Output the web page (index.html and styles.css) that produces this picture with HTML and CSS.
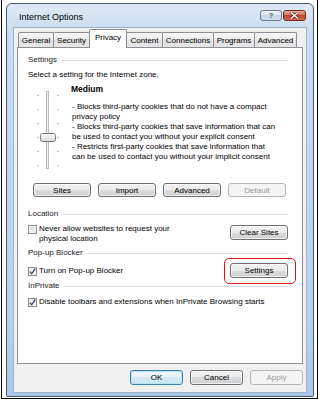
FILE: index.html
```html
<!DOCTYPE html>
<html lang="en">
  <head>
    <meta charset="UTF-8" />
    <title>Internet Options</title>
    <link rel="stylesheet" href="styles.css">
  </head>
  <body>
    <div class="shot">
      <div class="outline">
        <div class="window">
          <div class="titlebar">
            <span class="title">Internet Options</span>
            <div class="caption">
              <span class="cap help">?</span>
              <span class="cap close">
                <svg width="9" height="7" viewBox="0 0 9 7">
                  <path d="M1 0.5 L8 6.5 M8 0.5 L1 6.5" stroke="#5a1a12" stroke-width="2.6"/>
                  <path d="M1 0.5 L8 6.5 M8 0.5 L1 6.5" stroke="#ffffff" stroke-width="1.4"/>
                </svg>
              </span>
            </div>
          </div>

          <div class="client">
            <div class="tabs">
              <span class="tab w-general">General</span>
              <span class="tab w-security">Security</span>
              <span class="tab w-privacy active">Privacy</span>
              <span class="tab w-content">Content</span>
              <span class="tab w-connections">Connections</span>
              <span class="tab w-programs">Programs</span>
              <span class="tab w-advanced">Advanced</span>
            </div>

            <div class="panel">
              <div class="group-head"><span>Settings</span></div>
              <p class="intro">Select a setting for the Internet zone.</p>

              <div class="zone">
                <svg class="slider" width="43" height="90" viewBox="0 0 43 90">
                  <defs>
                    <linearGradient id="thumb" x1="0" y1="0" x2="0" y2="1">
                      <stop offset="0" stop-color="#fbfbfb" />
                      <stop offset="0.5" stop-color="#ececec" />
                      <stop offset="1" stop-color="#d6d6d6" />
                    </linearGradient>
                  </defs>
                  <rect x="18.5" y="7.5" width="2" height="77" fill="#f4f4f4" stroke="#b9bcbf" />
                  <g fill="#c4c4c4">
                    <rect x="9" y="11" width="2" height="1" />
                    <rect x="29" y="11" width="2" height="1" />
                    <rect x="9" y="25" width="2" height="1" />
                    <rect x="29" y="25" width="2" height="1" />
                    <rect x="9" y="39" width="2" height="1" />
                    <rect x="29" y="39" width="2" height="1" />
                    <rect x="9" y="53" width="2" height="1" />
                    <rect x="29" y="53" width="2" height="1" />
                    <rect x="9" y="67" width="2" height="1" />
                    <rect x="29" y="67" width="2" height="1" />
                    <rect x="9" y="81" width="2" height="1" />
                    <rect x="29" y="81" width="2" height="1" />
                  </g>
                  <rect x="12.5" y="49.5" width="15" height="8" rx="2" fill="url(#thumb)" stroke="#7a7a7a" />
                </svg>
                <div class="level">
                  <strong class="level-name">Medium</strong>
                  <p class="level-desc">
                    - Blocks third-party cookies that do not have a compact<br>
                    privacy policy<br>
                    - Blocks third-party cookies that save information that can<br>
                    be used to contact you without your explicit consent<br>
                    - Restricts first-party cookies that save information that<br>
                    can be used to contact you without your implicit consent
                  </p>
                </div>
              </div>

              <div class="btn-row">
                <button class="btn wide">Sites</button>
                <button class="btn wide">Import</button>
                <button class="btn wide">Advanced</button>
                <button class="btn wide" disabled>Default</button>
              </div>

              <div class="group-head head-location"><span>Location</span></div>
              <div class="opt-row loc-row">
                <label class="check">
                  <span class="box"></span>
                  <span>Never allow websites to request your<br>physical location</span>
                </label>
                <button class="btn side">Clear Sites</button>
              </div>

              <div class="group-head head-popup"><span>Pop-up Blocker</span></div>
              <div class="opt-row popup-row">
                <label class="check">
                  <span class="box checked">
                    <svg width="7" height="7" viewBox="0 0 7 7"><path d="M0.8 3.6 L2.7 5.8 L6.3 0.6" fill="none" stroke="#33486b" stroke-width="1.3" /></svg>
                  </span>
                  <span>Turn on Pop-up Blocker</span>
                </label>
                <button class="btn side marked">Settings</button>
              </div>

              <div class="group-head head-private"><span>InPrivate</span></div>
              <div class="opt-row private-row">
                <label class="check">
                  <span class="box checked">
                    <svg width="7" height="7" viewBox="0 0 7 7"><path d="M0.8 3.6 L2.7 5.8 L6.3 0.6" fill="none" stroke="#33486b" stroke-width="1.3" /></svg>
                  </span>
                  <span>Disable toolbars and extensions when InPrivate Browsing starts</span>
                </label>
              </div>
            </div>

            <div class="footer">
              <button class="btn foot default">OK</button>
              <button class="btn foot">Cancel</button>
              <button class="btn foot" disabled>Apply</button>
            </div>
          </div>
        </div>
      </div>
    </div>
  </body>
</html>
```

FILE: styles.css
```css
* {
  box-sizing: border-box;
}

body {
  margin: 0;
  background: #ffffff;
  font-family: "Liberation Sans", Arial, sans-serif;
  font-size: 8px;
  color: #000000;
}

/* Screenshot frame */
.shot {
  width: 320px;
  height: 402px;
  padding: 0 2px 0 1px;
}

.outline {
  height: 399px;
  border: 1px solid #000000;
  border-top: 0;
  padding: 3px 3px 1px 4px;
}

/* Dialog window */
.window {
  height: 394px;
  border: 1px solid #4a5a6c;
  border-radius: 6px 6px 2px 2px;
  background: linear-gradient(#dfe9f5, #c9dbef 30px, #b9d1ec 80%, #a9c8e8);
  padding: 0 6px 3px 6px;
  display: flex;
  flex-direction: column;
}

.titlebar {
  height: 23px;
  display: flex;
  align-items: center;
}

.title {
  font-size: 9px;
  padding-left: 6px;
  margin-top: 2px;
}

.caption {
  margin-left: auto;
  margin-right: 1px;
  align-self: flex-start;
  margin-top: 6px;
  display: flex;
  gap: 1px;
}

.cap {
  height: 11px;
  border-radius: 3px;
  display: flex;
  align-items: center;
  justify-content: center;
}

.help {
  width: 22px;
  border: 1px solid #6b7c92;
  background: linear-gradient(#eef3f9, #d9e3ef 50%, #c8d6e6 50%, #cfdcea);
  color: #4d5a6b;
  font-size: 8px;
  font-weight: bold;
}

.close {
  width: 23px;
  border: 1px solid #6e2b22;
  background: linear-gradient(#e9a999, #d46f5c 50%, #c0432c 50%, #d36a52);
}

/* Client area */
.client {
  flex: 1;
  background: #f0f0f0;
  border: 1px solid #9fb3ca;
  padding: 1px 3px 0 3px;
}

.tabs {
  height: 18px;
  padding-left: 1px;
  display: flex;
  align-items: flex-end;
}

.tab {
  height: 15px;
  margin-right: -1px;
  border: 1px solid #8c8e94;
  border-bottom: 0;
  border-radius: 2px 2px 0 0;
  background: linear-gradient(#f7f7f7, #ececec 50%, #e0e0e0 50%, #e6e6e6);
  display: flex;
  align-items: center;
  justify-content: center;
  white-space: nowrap;
}

.tab.active {
  position: relative;
  z-index: 1;
  height: 19px;
  margin-bottom: -1px;
  background: #ffffff;
  padding-bottom: 3px;
}

.w-general { width: 36px; }
.w-security { width: 37px; }
.w-privacy { width: 38px; }
.w-content { width: 37px; }
.w-connections { width: 52px; }
.w-programs { width: 42px; }
.w-advanced { width: 43px; }

/* Tab panel */
.panel {
  height: 317px;
  background: #ffffff;
  border: 1px solid #8c8e94;
  padding: 0 14px 0 10px;
  line-height: 10px;
}

.group-head {
  height: 10px;
  margin-top: 7px;
  display: flex;
  align-items: center;
  color: #1b1b1b;
}

.group-head::after {
  content: "";
  flex: 1;
  height: 1px;
  margin-left: 4px;
  background: #d5dbe0;
}

.head-location { margin-top: 12px; }
.head-popup { margin-top: 4px; }
.head-private { margin-top: 3px; }

.intro {
  margin: 5px 0 0 0;
}

.zone {
  height: 90px;
  margin-top: 4px;
  display: flex;
}

.slider {
  flex: none;
}

.level-name {
  display: block;
  font-size: 8.5px;
}

.level-desc {
  margin: 8px 0 0 1px;
  white-space: nowrap;
}

/* Buttons */
.btn {
  height: 14px;
  padding: 0;
  font-family: inherit;
  font-size: 8px;
  color: #000000;
  border: 1px solid #707070;
  border-radius: 3px;
  background: linear-gradient(#f2f2f2, #ebebeb 50%, #dddddd 50%, #cfcfcf);
  box-shadow: inset 0 0 0 1px rgba(255, 255, 255, 0.7);
}

.btn:disabled {
  color: #9a9a9a;
  border-color: #b5b8bb;
  background: #f4f4f4;
  box-shadow: none;
}

.btn-row {
  margin: 9px 0 0 5px;
  display: flex;
  gap: 7px;
}

.btn.wide {
  width: 58px;
}

.btn.side {
  width: 58px;
  height: 15px;
  margin-left: auto;
  flex: none;
}

/* Red annotation round the Settings button */
.btn.marked {
  position: relative;
}

.btn.marked::after {
  content: "";
  position: absolute;
  top: -6px;
  bottom: -7px;
  left: -7px;
  right: -9px;
  border: 1.5px solid #e0101a;
  border-radius: 5px;
}

/* Check rows */
.opt-row {
  display: flex;
  align-items: center;
}

.loc-row {
  height: 20px;
  margin-top: 5px;
  align-items: flex-start;
}

.loc-row .btn {
  margin-top: 1px;
}

.popup-row {
  height: 15px;
  margin-top: 5px;
}

.private-row {
  height: 10px;
  margin-top: 6px;
}

.check {
  display: flex;
  align-items: flex-start;
  gap: 2px;
  white-space: nowrap;
}

.box {
  width: 9px;
  height: 9px;
  flex: none;
  margin-top: 1px;
  border: 1px solid #8f8f8f;
  background: linear-gradient(135deg, #dcdcdc, #f6f6f6);
  box-shadow: inset 0 0 0 1px #f4f4f4;
  display: flex;
  align-items: center;
  justify-content: center;
}

.box.checked {
  background: linear-gradient(135deg, #e4e4e4, #fbfbfb);
}

/* Dialog buttons */
.footer {
  margin-top: 6px;
  display: flex;
  justify-content: flex-end;
  gap: 7px;
}

.btn.foot {
  width: 53px;
  height: 15px;
}

.btn.default {
  border-color: #3c7fb1;
  box-shadow: inset 0 0 0 1px #b6e3f8;
  background: linear-gradient(#f4f9fc, #e6f2f9 50%, #d6e9f5 50%, #cfe4f2);
}
```
